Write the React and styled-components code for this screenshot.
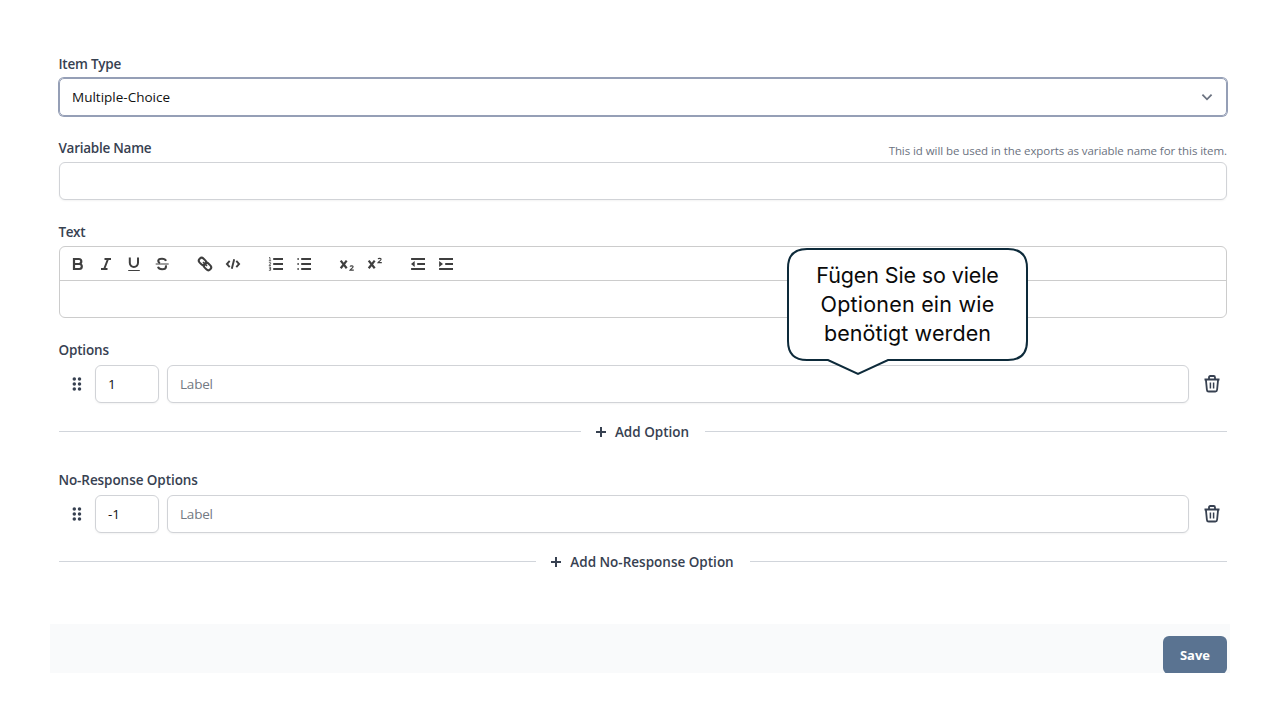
import React from "react";
import styled, { createGlobalStyle } from "styled-components";

const Global = createGlobalStyle`
  * { box-sizing: border-box; }
  body { margin: 0; background: #fff; }
  button, input { font: inherit; }
`;

const Page = styled.div`
  position: relative;
  width: 1280px;
  height: 720px;
  overflow: hidden;
  padding: 54px 50px 0;
  background: #fff;
  color: #374151;
  font: 400 13.5px/20px "Open Sans", "Noto Sans", sans-serif;
`;

const Form = styled.main`
  width: 1168px;
  height: 570px;
  margin-left: 9px;
`;

const Field = styled.section`
  margin-bottom: ${(p) => p.$gap ?? 22}px;
`;

const LabelRow = styled.div`
  display: flex;
  justify-content: space-between;
  height: 20px;
  margin-bottom: ${(p) => p.$gap ?? 4}px;
`;

const Label = styled.label`
  margin-left: -0.6px;
  font-weight: 600;
  letter-spacing: ${(p) => p.$track ?? 0}px;
  white-space: nowrap;
`;

const Hint = styled.span`
  padding-top: 3px;
  font-size: 11.5px;
  letter-spacing: -0.07px;
  color: #6b7280;
  white-space: nowrap;
`;

const Select = styled.div`
  display: flex;
  align-items: center;
  justify-content: space-between;
  height: 38px;
  padding: 0 13px 0 12px;
  border: 1px solid #959fb6;
  border-radius: 5px;
  box-shadow: 0 0 0 1px #959fb6;
  color: #111;
  letter-spacing: 0;
`;

const Input = styled.input`
  display: block;
  width: ${(p) => p.$width ?? "100%"};
  min-width: 0;
  height: 38px;
  padding: 0 12px;
  border: 1px solid #d1d3d7;
  border-radius: 6px;
  background: #fff;
  box-shadow: 0 1px 2px rgba(0, 0, 0, 0.05);
  color: #111;
  letter-spacing: -0.2px;
  outline: none;
  &::placeholder { color: #737982; opacity: 1; }
`;

const Editor = styled.div`
  height: 72px;
  border: 1px solid #ccc;
  border-radius: 6px;
  overflow: hidden;
`;

const Toolbar = styled.div`
  display: flex;
  align-items: center;
  gap: 15px;
  height: 34px;
  padding: 0 4px;
  border-bottom: 1px solid #ccc;
`;

const ToolGroup = styled.div`
  display: flex;
`;

const Tool = styled.button`
  display: flex;
  justify-content: center;
  width: 28px;
  padding: 0;
  border: 0;
  background: none;
  color: #3f3f3f;
`;

const OptionRow = styled.div`
  display: flex;
  align-items: center;
  gap: 8px;
`;

const Handle = styled.span`
  display: flex;
  justify-content: center;
  width: 28px;
  padding-left: 8px;
`;

const Remove = styled.button`
  display: flex;
  justify-content: center;
  width: 30px;
  padding: 0;
  border: 0;
  background: none;
  color: #374151;
`;

const Divider = styled.div`
  display: flex;
  align-items: center;
  height: 20px;
  margin-top: 19px;
  &::before, &::after {
    content: "";
    flex: 1;
    height: 1px;
    margin-bottom: 1px;
    background: #d1d5db;
  }
`;

const AddButton = styled.button`
  display: flex;
  align-items: center;
  gap: 8px;
  height: 20px;
  padding: 0 16px 0 14px;
  border: 0;
  background: none;
  color: #374151;
  font-weight: 600;
  letter-spacing: ${(p) => p.$track ?? 0}px;
  white-space: nowrap;
`;

const Footer = styled.footer`
  display: flex;
  justify-content: flex-end;
  width: 1180px;
  height: 49px;
  padding: 12px 3px 0 0;
  overflow: hidden;
  background: #f9fafb;
`;

const SaveButton = styled.button`
  width: 64px;
  height: 38px;
  padding: 0;
  border: 0;
  border-radius: 6px;
  background: #5a7391;
  color: #fff;
  font-weight: 700;
  font-size: 13px;
`;

const Callout = styled.aside`
  position: absolute;
  left: 786px;
  top: 247px;
  width: 243px;
  height: 130px;
  padding-top: 14px;
  color: #0a0a0a;
  font: 400 21.5px/29px Inter, "Liberation Sans", sans-serif;
  text-align: center;
`;

const Bubble = styled.svg`
  position: absolute;
  inset: 0;
`;

const CalloutText = styled.div`
  position: relative;
  white-space: nowrap;
  letter-spacing: ${(p) => p.$track ?? 0}px;
`;

const icons = {
  bold: <path d="M5 4h4.8a2.5 2.5 0 0 1 0 5H5zM5 9h5.3a2.5 2.5 0 0 1 0 5H5z" strokeWidth="2.2" />,
  italic: <path d="M7.5 4H14M4 14h6.5M11 4 7.2 14" strokeWidth="2" />,
  underline: <><path d="M4.8 2.5v5.3a4.1 4.1 0 0 0 8.2 0V2.5" strokeWidth="2" /><path d="M3.2 15.5h11.6" strokeWidth="1.2" /></>,
  strike: <><path d="M13 5.8C12.4 4.3 11 3.7 9 3.7c-2.3 0-3.8.9-3.8 2.4 0 1 .7 1.6 1.8 2M5 11.8c.5 1.7 2 2.5 4.1 2.5 2.4 0 3.9-1 3.9-2.6 0-.6-.2-1-.5-1.4" strokeWidth="2" /><path d="M2.7 9h13" strokeWidth="1.2" /></>,
  link: <g strokeWidth="2"><rect x="2.5" y="3.7" width="8" height="5.6" rx="2.8" transform="rotate(45 6.5 6.5)" /><rect x="7.5" y="8.7" width="8" height="5.6" rx="2.8" transform="rotate(45 11.5 11.5)" /><path d="m7 7 4 4" strokeWidth="1.5" /></g>,
  code: <path d="M5.7 5.8 2.9 9l2.8 3.2M12.3 5.8 15.1 9l-2.8 3.2M10.2 4.2 7.8 13.8" strokeWidth="1.9" />,
  ordered: <><path d="M6.2 4H16M6.2 9H16M6.2 14H16" strokeWidth="2" /><path d="M2 2.6h1v3.2M1.8 5.8h2.4M1.9 7.7h1.7v1.1L2 10.4h2M1.9 12.1h1.7v3.2H1.9M2.2 13.7h1.4" strokeWidth=".8" /></>,
  bullet: <><path d="M6.2 4H16M6.2 9H16M6.2 14H16" strokeWidth="2" /><path d="M2.3 4H4M2.3 9H4M2.3 14H4" strokeWidth="1.6" /></>,
  sub: <><path d="m2.7 5.6 6 7.6m0-7.6-6 7.6" strokeWidth="2.2" /><path d="M12.1 11.6c.2-.9 3-1.2 3 .2 0 1-2 2-3 3.3h3.7" strokeWidth="1.1" /></>,
  sup: <><path d="m2.7 5.6 6 7.6m0-7.6-6 7.6" strokeWidth="2.2" /><path d="M12.1 4.1c.2-.9 3-1.2 3 .2 0 1-2 2-3 3.3h3.7" strokeWidth="1.1" /></>,
  outdent: <><path d="M2.1 4H16M8.2 9H16M2.1 14H16" strokeWidth="2" /><path d="m5.7 5.9v6.2L2 9z" fill="currentColor" stroke="none" /></>,
  indent: <><path d="M2.1 4H16M8.2 9H16M2.1 14H16" strokeWidth="2" /><path d="m2.1 5.9v6.2L6 9z" fill="currentColor" stroke="none" /></>,
};

const toolGroups = [
  ["bold", "italic", "underline", "strike"],
  ["link", "code"],
  ["ordered", "bullet"],
  ["sub", "sup"],
  ["outdent", "indent"],
];

const Icon = ({ name }) => (
  <svg width="18" height="18" viewBox="0 0 18 18" fill="none" stroke="currentColor">{icons[name]}</svg>
);

const DragIcon = () => (
  <svg width="20" height="20" viewBox="0 0 20 20" fill="#374151">
    {[5, 10, 15].map((y) => <g key={y}><circle cx="7.3" cy={y} r="1.75" /><circle cx="12.5" cy={y} r="1.75" /></g>)}
  </svg>
);

const TrashIcon = () => (
  <svg width="18" height="20" viewBox="0 0 18 20" fill="none" stroke="currentColor" strokeWidth="1.8" strokeLinejoin="round">
    <path d="M1.5 5.5h15M6 5.2V3.4c0-.9.5-1.4 1.3-1.4h3.4c.8 0 1.3.5 1.3 1.4v1.8M2.9 5.6l1 10.2c.1 1.2.7 1.7 1.8 1.7h6.6c1.1 0 1.7-.5 1.8-1.7l1-10.2" />
    <path d="M7.4 8.4v6M10.6 8.4v6" strokeWidth="1.5" />
  </svg>
);

const PlusIcon = () => (
  <svg width="12" height="12" viewBox="0 0 12 12" stroke="#374151" strokeWidth="2"><path d="M6 1v10M1 6h10" /></svg>
);

const Options = ({ title, value, add, track, addTrack, gap }) => (
  <Field $gap={gap}>
    <LabelRow $gap={5}><Label $track={track}>{title}</Label></LabelRow>
    <OptionRow>
      <Handle><DragIcon /></Handle>
      <Input $width="64px" defaultValue={value} />
      <Input $width="1022px" placeholder="Label" />
      <Remove aria-label="Remove"><TrashIcon /></Remove>
    </OptionRow>
    <Divider><AddButton $track={addTrack}><PlusIcon />{add}</AddButton></Divider>
  </Field>
);

export default function App() {
  return (
    <Page>
      <Global />
      <Form>
        <Field>
          <LabelRow><Label $track={-0.22}>Item Type</Label></LabelRow>
          <Select>
            <span>Multiple-Choice</span>
            <svg width="12" height="8" viewBox="0 0 12 8" fill="none" stroke="#6b7280" strokeWidth="1.8"><path d="m1.4 1.7 4.6 4.6 4.6-4.6" /></svg>
          </Select>
        </Field>
        <Field>
          <LabelRow>
            <Label $track={-0.25}>Variable Name</Label>
            <Hint>This id will be used in the exports as variable name for this item.</Hint>
          </LabelRow>
          <Input />
        </Field>
        <Field>
          <LabelRow><Label $track={-0.35}>Text</Label></LabelRow>
          <Editor>
            <Toolbar>
              {toolGroups.map((g) => (
                <ToolGroup key={g[0]}>{g.map((n) => <Tool key={n} aria-label={n}><Icon name={n} /></Tool>)}</ToolGroup>
              ))}
            </Toolbar>
          </Editor>
        </Field>
        <Options title="Options" value="1" add="Add Option" gap={28} track={-0.15} />
        <Options title="No-Response Options" value="-1" add="Add No-Response Option" gap={0} track={-0.07} />
      </Form>
      <Footer><SaveButton>Save</SaveButton></Footer>
      <Callout>
        <Bubble width="243" height="130" viewBox="0 0 243 130">
          <path d="M21 2H222Q241 2 241 21V94Q241 113 222 113H102L72 127 42 113H21Q2 113 2 94V21Q2 2 21 2Z" fill="#fff" stroke="#0d2a3a" strokeWidth="2" />
        </Bubble>
        <CalloutText $track={-0.12}>Fügen Sie so viele</CalloutText>
        <CalloutText $track={0.2}>Optionen ein wie</CalloutText>
        <CalloutText $track={0.1}>benötigt werden</CalloutText>
      </Callout>
    </Page>
  );
}
